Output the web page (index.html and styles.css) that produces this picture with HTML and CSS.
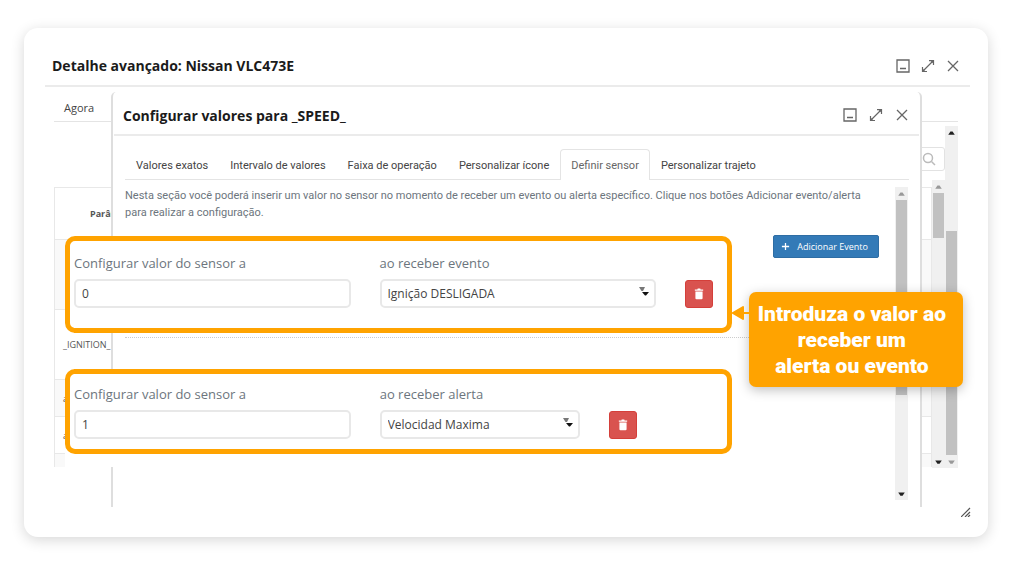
FILE: index.html
```html
<!doctype html>
<html lang="pt">
  <head>
    <meta charset="UTF-8" />
    <meta name="viewport" content="width=device-width, initial-scale=1.0" />
    <title>Detalhe avançado</title>
    <link rel="stylesheet" href="styles.css">
  </head>
  <body>
    <svg class="sprite" aria-hidden="true">
      <symbol id="minimize" viewBox="0 0 14 14">
        <path d="M1 1h12v12H1zM4 9.500h6" fill="none" stroke="currentColor" stroke-width="1.300" />
      </symbol>
      <symbol id="expand" viewBox="0 0 14 14">
        <path d="M2 12L12 2M8 1.600h4.500v4.500M1.500 8v4.500h4.500" fill="none" stroke="currentColor" stroke-width="1.200" />
        <path d="M9 1.200h4v4zM1 9v4h4z" fill="currentColor" />
      </symbol>
      <symbol id="close" viewBox="0 0 14 14">
        <path d="M2 2l10 10M12 2L2 12" fill="none" stroke="currentColor" stroke-width="1.300" />
      </symbol>
      <symbol id="trash" viewBox="0 0 12 14">
        <path d="M1 1.500h3L4.500 .5h3l.5 1h3V3H1zM1.700 4h8.600v8a1.300 1.300 0 0 1-1.300 1.300H3A1.300 1.300 0 0 1 1.700 12z" fill="currentColor" />
      </symbol>
      <symbol id="up" viewBox="0 0 12 12">
        <path d="M3 8h6L7 5H5z" fill="currentColor" />
      </symbol>
      <symbol id="down" viewBox="0 0 12 12">
        <path d="M3 5h6L7 8H5z" fill="currentColor" />
      </symbol>
      <symbol id="carets" viewBox="0 0 12 10">
        <path d="M1 0h6L5 4H3.500z" fill="#777" />
        <path d="M4 5h7L8 8.500H7z" fill="#111" />
      </symbol>
    </svg>

    <main class="window">
      <header class="window-header">
        <h1>Detalhe avançado: Nissan VLC473E</h1>
        <div class="window-actions">
          <button aria-label="Minimizar"><svg><use href="#minimize" /></svg></button>
          <button aria-label="Expandir"><svg><use href="#expand" /></svg></button>
          <button aria-label="Fechar"><svg><use href="#close" /></svg></button>
        </div>
      </header>

      <section class="detail">
        <nav class="detail-nav"><a href="#">Agora</a></nav>
        <div class="detail-body">
          <div class="detail-main">
            <div class="search">
              <button aria-label="Pesquisar">
                <svg viewBox="0 0 14 14"><circle cx="6" cy="6" r="4.500" fill="none" stroke="currentColor" stroke-width="1.500" /><path d="M9.500 9.500l3.500 3.500" stroke="currentColor" stroke-width="1.500" /></svg>
              </button>
            </div>
            <div class="detail-list">
              <table>
                <thead>
                  <tr><th>Parâm</th></tr>
                </thead>
                <tbody>
                  <tr class="tall"><td></td></tr>
                  <tr class="tall"><td>_IGNITION_ p</td></tr>
                  <tr><td>a</td></tr>
                  <tr><td>a</td></tr>
                  <tr class="cut"><td></td></tr>
                </tbody>
              </table>
              <div class="scrollbar inner">
                <svg class="muted"><use href="#up" /></svg>
                <div class="track"><div class="thumb"></div></div>
                <svg><use href="#down" /></svg>
              </div>
            </div>
          </div>
          <div class="scrollbar outer">
            <svg><use href="#up" /></svg>
            <div class="track"><div class="thumb"></div></div>
            <svg class="muted"><use href="#down" /></svg>
          </div>
        </div>
      </section>

      <section class="dialog">
        <header class="dialog-header">
          <h2>Configurar valores para _SPEED_</h2>
          <div class="window-actions">
            <button aria-label="Minimizar"><svg><use href="#minimize" /></svg></button>
            <button aria-label="Expandir"><svg><use href="#expand" /></svg></button>
            <button aria-label="Fechar"><svg><use href="#close" /></svg></button>
          </div>
        </header>
        <nav class="tabs">
          <a href="#">Valores exatos</a>
          <a href="#">Intervalo de valores</a>
          <a href="#">Faixa de operação</a>
          <a href="#">Personalizar ícone</a>
          <a href="#" class="active">Definir sensor</a>
          <a href="#">Personalizar trajeto</a>
        </nav>
        <div class="dialog-body">
          <div class="dialog-content">
            <p>Nesta seção você poderá inserir um valor no sensor no momento de receber um evento ou alerta específico. Clique nos botões Adicionar evento/alerta para realizar a configuração.</p>
            <button class="add">
              <svg viewBox="0 0 10 10"><path d="M5 1v8M1 5h8" stroke="currentColor" stroke-width="1.400" /></svg>
              Adicionar Evento
            </button>
            <hr>
          </div>
          <div class="scrollbar content">
            <svg class="muted"><use href="#up" /></svg>
            <div class="track"><div class="thumb"></div></div>
            <svg><use href="#down" /></svg>
          </div>
        </div>
      </section>

      <div class="steps">
        <form class="step event">
          <div class="field">
            <label for="eventValue">Configurar valor do sensor a</label>
            <input type="text" id="eventValue" value="0" />
          </div>
          <div class="field">
            <label for="event">ao receber evento</label>
            <div class="select">
              <select id="event"><option>Ignição DESLIGADA</option></select>
              <svg><use href="#carets" /></svg>
            </div>
          </div>
          <button type="button" class="delete" aria-label="Excluir evento"><svg><use href="#trash" /></svg></button>
        </form>
        <div class="step-cover">
          <form class="step alert">
            <div class="field">
              <label for="alertValue">Configurar valor do sensor a</label>
              <input type="text" id="alertValue" value="1" />
            </div>
            <div class="field">
              <label for="alert">ao receber alerta</label>
              <div class="select">
                <select id="alert"><option>Velocidad Maxima</option></select>
                <svg><use href="#carets" /></svg>
              </div>
            </div>
            <button type="button" class="delete" aria-label="Excluir alerta"><svg><use href="#trash" /></svg></button>
          </form>
        </div>
      </div>

      <aside class="callout">
        <svg viewBox="0 0 18 14"><path d="M0 7L12 0a1 1 0 0 1 1 1v5h5v2h-5v5a1 1 0 0 1-1 1z" fill="currentColor" /></svg>
        <p>Introduza o valor ao<br>receber um<br>alerta ou evento</p>
      </aside>

      <svg class="resize" viewBox="0 0 10 10"><path d="M0 10L9 1M4 10l5-5M7 10l2-2" stroke="currentColor" stroke-width="1.200" /></svg>
    </main>
  </body>
</html>
```
FILE: styles.css
```css
* {
  box-sizing: border-box;
}

body {
  margin: 0;
  padding: 28px 23px 29px 24px;
  background-color: #fff;
  color: #444;
  font-family: "Open Sans", sans-serif;
  font-size: 11px;
}

h1,
h2,
p {
  margin: 0;
}

a {
  color: inherit;
  text-decoration: none;
}

button {
  display: flex;
  align-items: center;
  justify-content: center;
  padding: 0;
  border: none;
  background: none;
  color: inherit;
  font: inherit;
  cursor: pointer;
}

.sprite {
  display: none;
}

.window {
  position: relative;
  min-height: calc(100vh - 57px);
  padding: 18px 18px 0 21px;
  background-color: #fff;
  border-radius: 14px;
  box-shadow: 0 3px 14px rgba(0, 0, 0, 0.16);
}

.window-header,
.dialog-header {
  display: flex;
  align-items: center;
  justify-content: space-between;
  border-bottom: 2px solid #ebebeb;
}

.window-header {
  height: 41px;
  padding: 0 10px 0 7px;
}

h1,
h2 {
  color: #1b1b1b;
  font-size: 14px;
  font-weight: 700;
}

.window-actions {
  display: flex;
  gap: 11px;
  color: #666;
}

.window-actions svg {
  width: 14px;
  height: 14px;
}

/* page behind the dialog */
.detail {
  margin: 5px 12px 0 9px;
}

.detail-nav {
  height: 30px;
  padding: 8px 10px;
  border-bottom: 1px solid #e4e4e4;
}

.detail-body {
  display: flex;
  height: 346px;
  padding-top: 4px;
}

.detail-main {
  flex: 1;
  display: flex;
  flex-direction: column;
}

.search {
  display: flex;
  justify-content: flex-end;
  height: 54px;
  padding-top: 21px;
}

.search button {
  width: 32px;
  height: 24px;
  border: 1px solid #e2e2e2;
  border-radius: 3px;
  color: #bbb;
}

.search svg {
  width: 14px;
  height: 14px;
}

.detail-list {
  flex: 1;
  display: flex;
  min-height: 0;
}

table {
  flex: 1;
  display: table;
  height: 280px;
  margin-top: 7px;
  border-collapse: collapse;
  color: #555;
  font-size: 9px;
}

th,
td {
  height: 37px;
  padding: 0 8px;
  border: 1px solid #e8e8e8;
  text-align: left;
}

th {
  height: 52px;
  padding-left: 35px;
}

.tall td {
  height: 70px;
}

.cut td {
  height: 13px;
  border-bottom: none;
}

tbody tr:nth-child(odd) {
  background-color: #f9f9f9;
}

.scrollbar {
  display: flex;
  flex-direction: column;
  width: 13px;
  background-color: #f0f0f0;
  color: #222;
}

.scrollbar svg {
  width: 13px;
  height: 13px;
}

.scrollbar .muted {
  color: #999;
}

.track {
  flex: 1;
}

.thumb {
  margin: 0 1px;
  background-color: #c1c1c1;
}

.inner .thumb {
  height: 17%;
}

.outer .track {
  display: flex;
  flex-direction: column;
  justify-content: flex-end;
}

.outer .thumb {
  height: 71%;
}

.content .thumb {
  height: 68%;
}

/* dialog */
.dialog {
  position: absolute;
  top: 64px;
  right: 66px;
  bottom: 30px;
  left: 87px;
  display: flex;
  flex-direction: column;
  padding: 0 1px;
  background-color: #fff;
  border: 2px solid #dedede;
  border-width: 0 2px;
  border-radius: 5px 5px 0 0;
}

.dialog-header {
  height: 44px;
  padding: 4px 10px 0 9px;
}

.dialog-header .window-actions {
  gap: 12px;
}

.tabs {
  display: flex;
  margin: 13px 10px 0 11px;
  border-bottom: 1px solid #e4e4e4;
  font-family: Roboto, sans-serif;
}

.tabs a {
  height: 30px;
  padding: 0 10px;
  border: 1px solid transparent;
  line-height: 31px;
}

.tabs .active {
  height: 31px;
  margin-bottom: -1px;
  background-color: #fff;
  border-color: #e4e4e4;
  border-bottom: none;
  border-radius: 4px 4px 0 0;
  color: #666;
}

.dialog-body {
  flex: 1;
  display: flex;
  margin: 7px 11px 7px 11px;
}

.dialog-content {
  flex: 1;
  padding-right: 16px;
  color: #6c757d;
}

.dialog-content p {
  font: 11px/17px Roboto, sans-serif;
}

.add {
  gap: 7px;
  height: 23px;
  margin: 14px 0 0 auto;
  padding: 0 10px 0 7px;
  background-color: #337ab7;
  border: 1px solid #2e6da4;
  border-radius: 2px;
  color: #fff;
  font-size: 9px;
}

.add svg {
  width: 9px;
  height: 9px;
}

hr {
  margin: 79px 0 0;
  border: none;
  border-top: 1px dotted #ccc;
}

/* highlighted rows */
.steps {
  position: absolute;
  top: 208px;
  right: 256px;
  left: 41px;
  display: flex;
  flex-direction: column;
  gap: 36px;
}

.step {
  display: grid;
  grid-template-columns: 1fr 1fr 28px;
  column-gap: 29px;
  align-items: end;
  padding: 12px 14px 20px 4px;
  background-color: #fff;
  border: 5px solid #ffa300;
  border-radius: 10px;
}

.alert {
  grid-template-columns: 58fr 42fr 28px;
  padding: 10px 90px 10px 4px;
}

.step-cover {
  padding-bottom: 13px;
  background-color: #fff;
  border-radius: 10px 10px 0 0;
}

.field label {
  display: block;
  margin-bottom: 6px;
  color: #6c757d;
  font-size: 13px;
  line-height: 20px;
}

input,
select {
  display: block;
  width: 100%;
  height: 29px;
  padding: 0 6px;
  background-color: #fff;
  border: 2px solid #e8e8e8;
  border-radius: 5px;
  color: #444;
  font: 12px "Open Sans", sans-serif;
  appearance: none;
}

.select {
  position: relative;
}

.select svg {
  position: absolute;
  top: 8px;
  right: 6px;
  width: 12px;
  height: 10px;
  pointer-events: none;
}

.delete {
  width: 28px;
  height: 28px;
  background-color: #d9534f;
  border: 1px solid #d43f3a;
  border-radius: 3px;
  color: #fff;
}

.delete svg {
  width: 10px;
  height: 14px;
}

.callout {
  position: absolute;
  top: 264px;
  right: 25px;
  padding: 9px 17px 8px 9px;
  background-color: #ffa300;
  border-radius: 7px;
  box-shadow: 0 3px 12px rgba(0, 0, 0, 0.25);
  color: #fff;
  font: 900 21px/26px Roboto, sans-serif;
  text-align: center;
}

.callout svg {
  position: absolute;
  top: 14px;
  right: 100%;
  width: 18px;
  height: 14px;
  color: #ffa300;
}

.resize {
  position: absolute;
  right: 17px;
  bottom: 20px;
  width: 10px;
  height: 10px;
  color: #555;
}
```
